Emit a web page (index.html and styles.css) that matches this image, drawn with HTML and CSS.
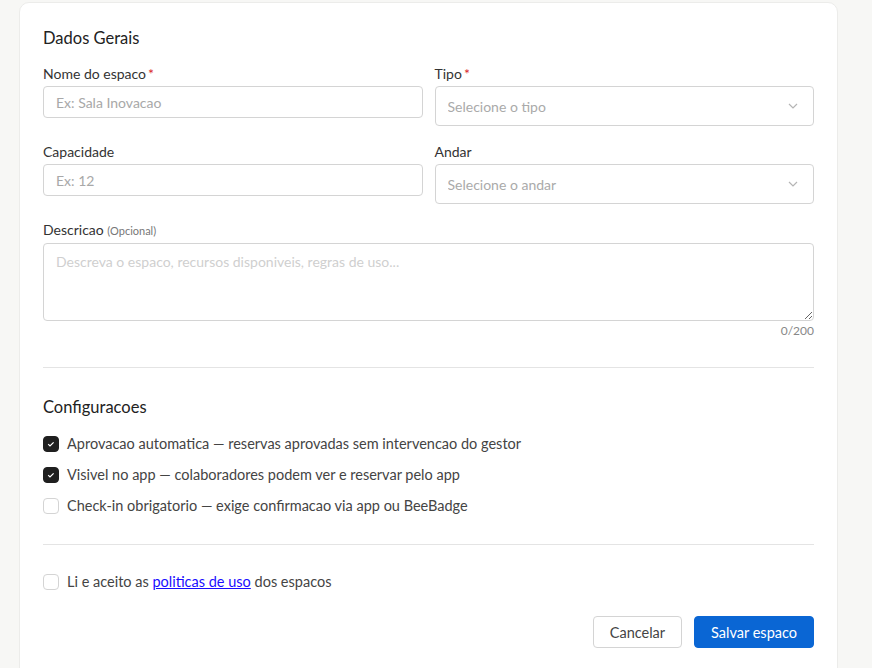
FILE: index.html
```html
<!DOCTYPE html>
<html lang="pt-BR">
<head>
<meta charset="UTF-8">
<meta name="viewport" content="width=device-width, initial-scale=1.0">
<title>Novo espaco</title>
<link rel="stylesheet" href="styles.css">
</head>
<body>
<div class="card">
  <h2 class="section-title">Dados Gerais</h2>
  <div class="form-grid">
    <div class="field">
      <label for="nome">Nome do espaco<span class="req">*</span></label>
      <input type="text" id="nome" placeholder="Ex: Sala Inovacao">
    </div>
    <div class="field">
      <label for="tipo">Tipo<span class="req">*</span></label>
      <div class="select-wrap">
        <select id="tipo">
          <option value="">Selecione o tipo</option>
        </select>
        <svg class="chevron" width="10" height="6" viewBox="0 0 10 6"><path d="M1 1l4 4 4-4" fill="none" stroke="#b5b5b5" stroke-width="1.2"/></svg>
      </div>
    </div>
    <div class="field">
      <label for="capacidade">Capacidade</label>
      <input type="text" id="capacidade" placeholder="Ex: 12">
    </div>
    <div class="field">
      <label for="andar">Andar</label>
      <div class="select-wrap">
        <select id="andar">
          <option value="">Selecione o andar</option>
        </select>
        <svg class="chevron" width="10" height="6" viewBox="0 0 10 6"><path d="M1 1l4 4 4-4" fill="none" stroke="#b5b5b5" stroke-width="1.2"/></svg>
      </div>
    </div>
    <div class="field full">
      <label for="descricao">Descricao <small>(Opcional)</small></label>
      <textarea id="descricao" placeholder="Descreva o espaco, recursos disponiveis, regras de uso..."></textarea>
      <div class="counter">0/200</div>
    </div>
  </div>

  <hr class="divider">

  <h2 class="section-title">Configuracoes</h2>
  <div class="options">
    <label class="check"><input type="checkbox" checked><span>Aprovacao automatica &mdash; reservas aprovadas sem intervencao do gestor</span></label>
    <label class="check"><input type="checkbox" checked><span>Visivel no app &mdash; colaboradores podem ver e reservar pelo app</span></label>
    <label class="check"><input type="checkbox"><span>Check-in obrigatorio &mdash; exige confirmacao via app ou BeeBadge</span></label>
  </div>

  <hr class="divider">

  <label class="check"><input type="checkbox"><span>Li e aceito as <a href="#">politicas de uso</a> dos espacos</span></label>

  <div class="actions">
    <button type="button" class="btn btn-secondary">Cancelar</button>
    <button type="button" class="btn btn-primary">Salvar espaco</button>
  </div>
</div>
</body>
</html>
```

FILE: styles.css
```css
body {
    font-family: Lato, "Open Sans", sans-serif;
    margin: 0;
    padding: 2px 34px 0 19px;
    background-color: #f7f7f5;
    color: #333;
}

.card {
    background-color: #fff;
    border: 1px solid #ececea;
    border-radius: 10px;
    padding: 23px 23px 40px;
}

.section-title {
    font-size: 16.5px;
    font-weight: 400;
    line-height: 24px;
    color: #222;
    margin: 0;
}

.form-grid {
    display: grid;
    grid-template-columns: 1fr 1fr;
    column-gap: 12px;
    row-gap: 17px;
    margin-top: 15px;
    align-items: start;
}

.field {
    display: flex;
    flex-direction: column;
}

.field.full {
    grid-column: 1 / 3;
}

.field label {
    font-size: 14px;
    line-height: 18px;
    margin-bottom: 3px;
    color: #333;
}

.field label small {
    font-size: 11px;
    color: #777;
}

.req {
    color: #d9262d;
    margin-left: 2px;
}

input[type="text"],
select,
textarea {
    font-family: inherit;
    font-size: 14px;
    color: #333;
    border: 1px solid #d4d4d4;
    border-radius: 4px;
    padding: 0 12px;
    background: #fff;
    box-sizing: border-box;
    width: 100%;
}

input[type="text"] {
    height: 32px;
}

select {
    height: 40px;
    appearance: none;
    -webkit-appearance: none;
    color: #aaa;
}

.select-wrap {
    position: relative;
}

.chevron {
    position: absolute;
    right: 16px;
    top: 17px;
}

textarea {
    height: 78px;
    padding: 8px 12px;
    line-height: 20px;
}

::placeholder {
    color: #a8a8a8;
}

textarea::placeholder {
    color: #cfcfcf;
}

.counter {
    text-align: right;
    font-size: 12px;
    line-height: 16px;
    color: #888;
    margin-top: 2px;
}

.divider {
    border: none;
    border-top: 1px solid #e4e4e4;
    margin: 28px 0 27px;
}

.options {
    display: flex;
    flex-direction: column;
    gap: 11px;
    margin-top: 15px;
}

.check {
    display: flex;
    align-items: center;
    gap: 8px;
    font-size: 14.5px;
    line-height: 20px;
    color: #444;
}

.check input {
    appearance: none;
    -webkit-appearance: none;
    width: 16px;
    height: 16px;
    margin: 0;
    border: 1px solid #d4d4d4;
    border-radius: 4px;
    background: #fff;
    flex-shrink: 0;
}

.check input:checked {
    background: #1f1f1f url("data:image/svg+xml,%3Csvg xmlns='http://www.w3.org/2000/svg' width='16' height='16'%3E%3Cpath d='M5.2 8.2l1.8 1.8 3.6-3.6' fill='none' stroke='white' stroke-width='1.2'/%3E%3C/svg%3E") center no-repeat;
    border-color: #1f1f1f;
}

.check a {
    color: #1a0dff;
    text-decoration: underline;
}

.actions {
    display: flex;
    justify-content: flex-end;
    gap: 12px;
    margin-top: 24px;
}

.btn {
    font-family: inherit;
    font-size: 14.5px;
    height: 32px;
    padding: 0 16px;
    border-radius: 4px;
    cursor: pointer;
}

.btn-secondary {
    background: #fff;
    border: 1px solid #d4d4d4;
    color: #444;
}

.btn-primary {
    background: #0a66d4;
    border: 1px solid #0a66d4;
    color: #fff;
}
```
